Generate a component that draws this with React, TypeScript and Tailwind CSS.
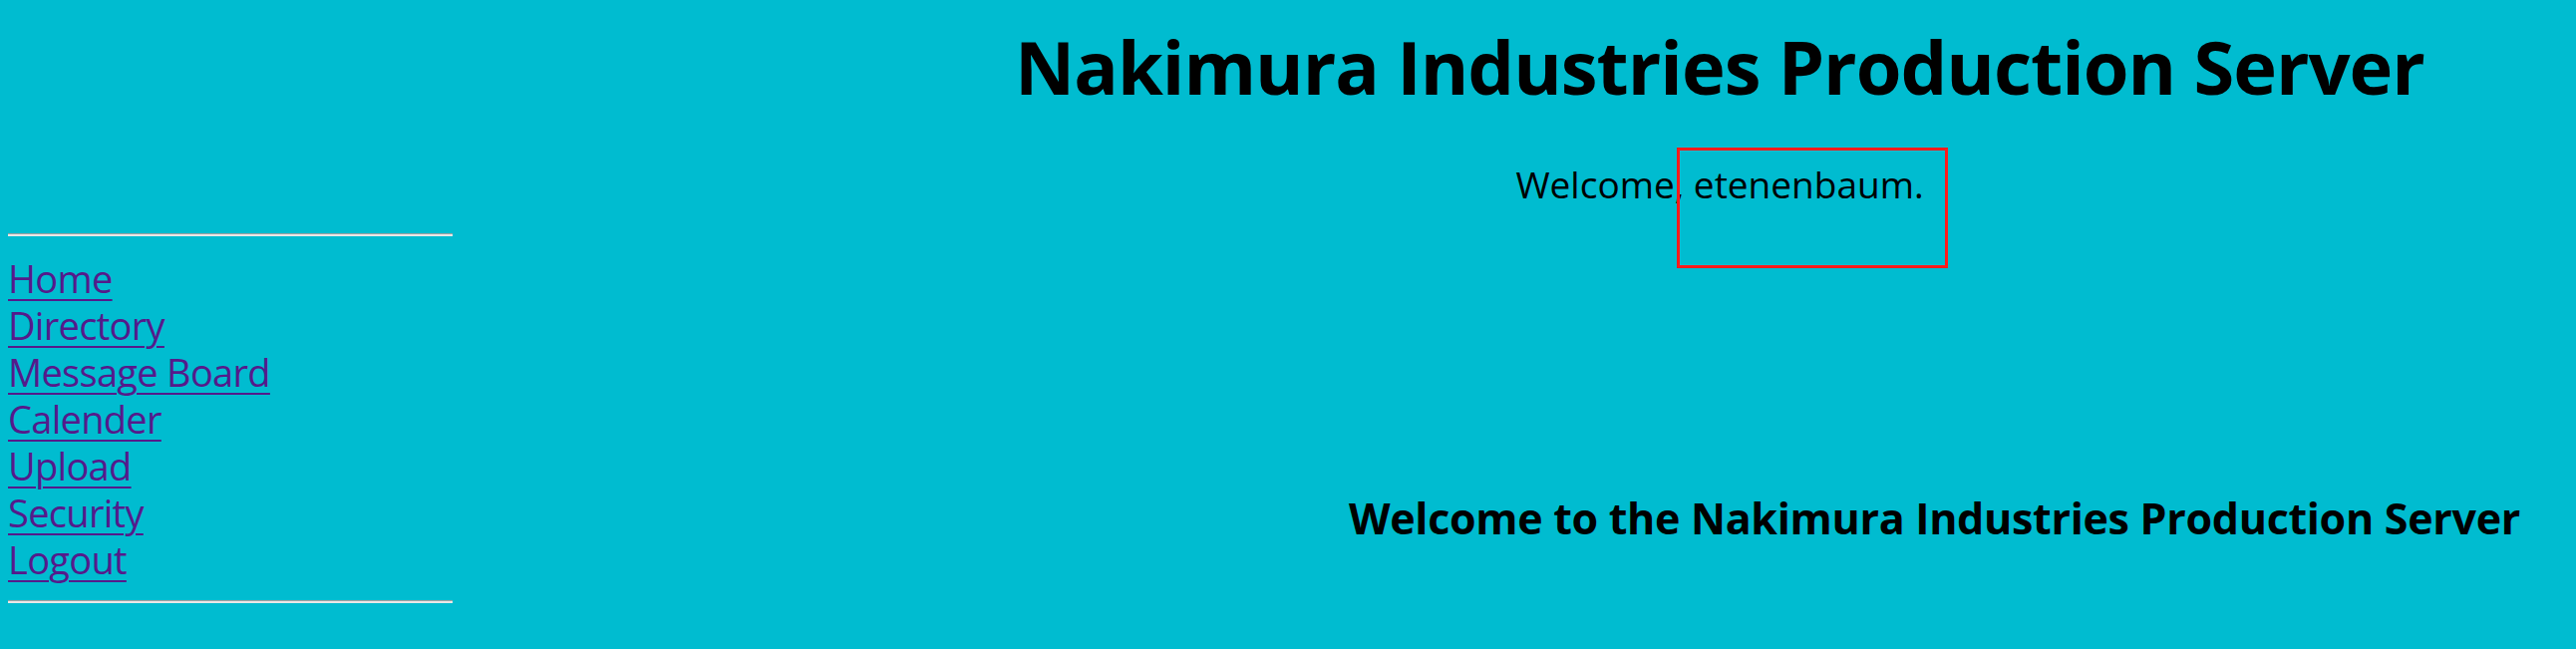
const links = ['Home', 'Directory', 'Message Board', 'Calender', 'Upload', 'Security', 'Logout'];

export default function App() {
  return (
    <div className="min-h-[651px] w-full bg-[#00bcd0] font-['Open_Sans','Noto_Sans',sans-serif] text-black overflow-hidden">
      <div className="flex">
        {/* sidebar */}
        <div className="w-[866px] shrink-0 pl-[8px] pt-[234px]">
          <div className="h-[3px] w-[446px] border-t border-[#a0a0a0] bg-[#e8e8e8]" />
          <ul className="mt-[19px] mb-[17px] text-[38px] leading-[47px] tracking-[-0.7px]">
            {links.map((l) => (
              <li key={l}>
                <a href="#" className="text-[#551a8b] underline underline-offset-[6px] decoration-2">
                  {l}
                </a>
              </li>
            ))}
          </ul>
          <div className="h-[3px] w-[446px] border-t border-[#a0a0a0] bg-[#e8e8e8]" />
        </div>

        {/* main */}
        <div className="flex-1">
          <h1 className="pt-[22px] text-center text-[74px] font-bold leading-[90px] tracking-[-1px]">
            Nakimura Industries Production Server
          </h1>
          <div className="mt-[47px] flex justify-center">
            <p className="relative text-[37px] leading-[52px]">
              Welcome, etenenbaum.
              <span className="absolute left-[162px] top-[-11px] h-[121px] w-[272px] border-[3px] border-[#ff1a1a]" />
            </p>
          </div>
          <h2 className="mt-[281px] pr-[56px] text-right text-[43px] font-bold leading-[56px] tracking-[-0.3px]">
            Welcome to the Nakimura Industries Production Server
          </h2>
        </div>
      </div>
    </div>
  );
}
